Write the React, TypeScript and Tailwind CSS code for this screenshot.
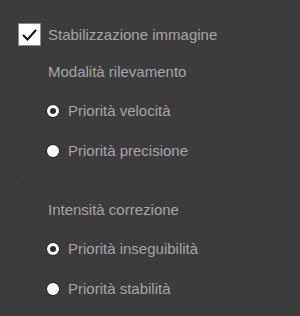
const Radio = ({ checked, label }: { checked?: boolean; label: string }) => (
  <div className="flex h-[18px] items-center pl-[47px]">
    <span
      className={
        checked
          ? 'flex h-[12px] w-[12px] items-center justify-center rounded-full bg-white shadow-[0_0_0_1px_#2a2a2a]'
          : 'h-[12px] w-[12px] rounded-full bg-white shadow-[0_0_0_1px_#2a2a2a]'
      }
    >
      {checked && <span className="h-[6px] w-[6px] rounded-full bg-[#2b2b2b]" />}
    </span>
    <span className="ml-[9px]">{label}</span>
  </div>
)

export default function App() {
  return (
    <div className="h-[316px] w-[300px] overflow-hidden bg-[#3c3c3c] font-['Liberation_Sans',Arial,sans-serif] text-[15px] leading-[18px] text-[#a6a6a6]">
      <div className="flex h-[24px] items-center pl-[18px] mt-[22px]">
        <span className="flex h-[23px] w-[23px] items-center justify-center border border-[#8a8a8a] bg-white">
          <svg width="17" height="17" viewBox="0 0 17 17" fill="none">
            <path d="M2 9 L6.5 13.5 L15 4" stroke="#111" strokeWidth="2" />
          </svg>
        </span>
        <span className="ml-[7px] mt-[2px]">Stabilizzazione immagine</span>
      </div>

      <div className="mt-[17px] pl-[48px]">Modalità rilevamento</div>

      <div className="mt-[21px]">
        <Radio checked label="Priorità velocità" />
      </div>
      <div className="mt-[22px]">
        <Radio label="Priorità precisione" />
      </div>

      <div className="ml-[18px] mr-[3px] mt-[23px] h-px bg-[#363636]" />

      <div className="mt-[17px] pl-[48px]">Intensità correzione</div>

      <div className="mt-[21px]">
        <Radio checked label="Priorità inseguibilità" />
      </div>
      <div className="mt-[22px]">
        <Radio label="Priorità stabilità" />
      </div>
    </div>
  )
}
